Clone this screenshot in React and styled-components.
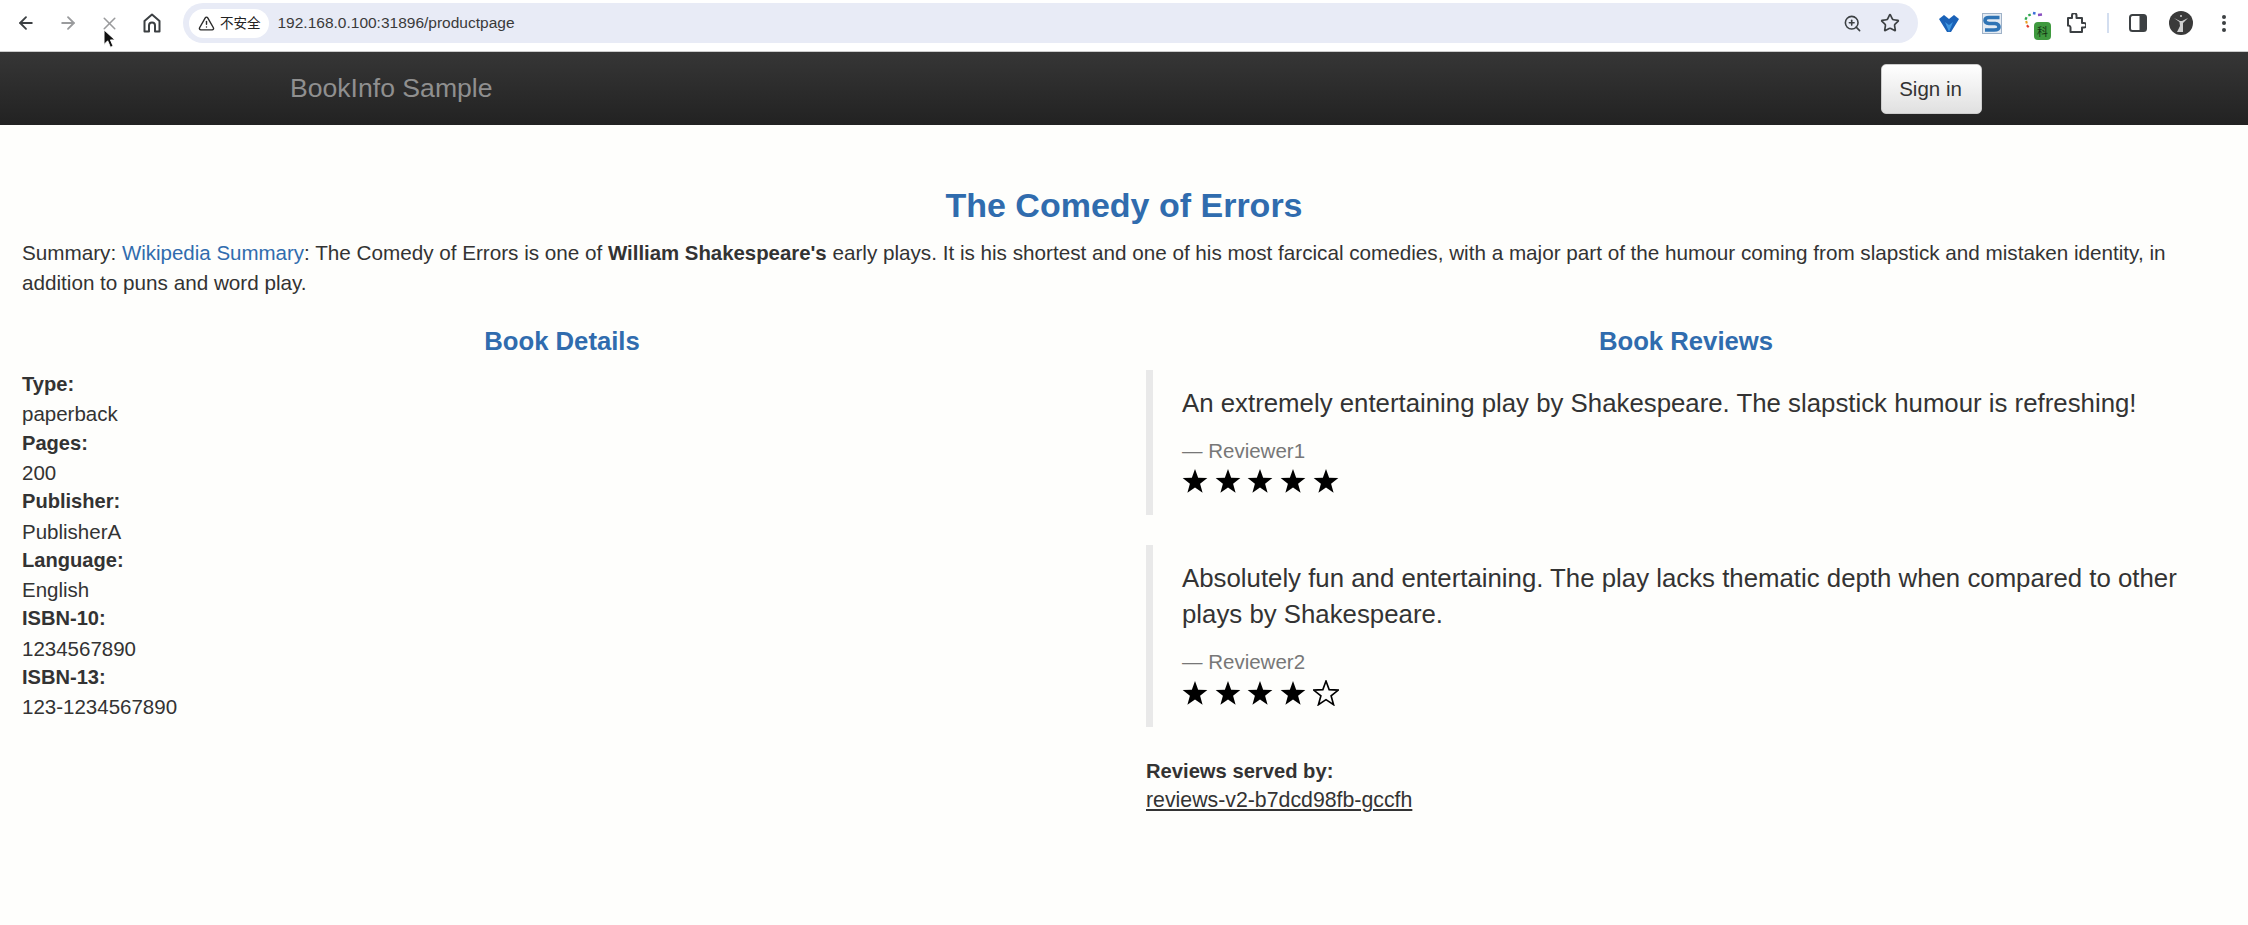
import styled, { createGlobalStyle } from 'styled-components';
import { ArrowLeft, ArrowRight, X, TriangleAlert, ZoomIn, Star as StarIcon } from 'lucide-react';

const details = [
  ['Type:', 'paperback'],
  ['Pages:', '200'],
  ['Publisher:', 'PublisherA'],
  ['Language:', 'English'],
  ['ISBN-10:', '1234567890'],
  ['ISBN-13:', '123-1234567890'],
];

const reviews = [
  {
    text: 'An extremely entertaining play by Shakespeare. The slapstick humour is refreshing!',
    name: 'Reviewer1',
    stars: 5,
  },
  {
    text: 'Absolutely fun and entertaining. The play lacks thematic depth when compared to other plays by Shakespeare.',
    name: 'Reviewer2',
    stars: 4,
  },
];

const STAR_POINTS = '12,1 14.9,8.9 23.4,9.3 16.7,14.6 19,22.8 12,18.1 5,22.8 7.3,14.6 0.6,9.3 9.1,8.9';

const RatingStar = ({ filled }) => (
  <StarSvg viewBox="0 0 24 24">
    <polygon
      points={STAR_POINTS}
      fill={filled ? '#000' : 'none'}
      stroke="#000"
      strokeWidth={filled ? 0 : 1.5}
    />
  </StarSvg>
);

export default function App() {
  return (
    <>
      <GlobalStyle />
      <Toolbar>
        <NavButtons>
          <IconSlot><ArrowLeft size={20} color="#3c4043" strokeWidth={2.2} /></IconSlot>
          <IconSlot><ArrowRight size={20} color="#9a9b9d" strokeWidth={2.2} /></IconSlot>
          <IconSlot><X size={21} color="#9a9b9d" strokeWidth={1.8} /></IconSlot>
          <IconSlot>
            <svg width="18" height="20" viewBox="0 0 18 20" fill="none" stroke="#3c4043" strokeWidth="2" strokeLinejoin="round">
              <path d="M1.5 18.5V8L9 1.5 16.5 8v10.5h-4.5v-6a3 3 0 0 0-6 0v6z" />
            </svg>
          </IconSlot>
          <Cursor viewBox="0 0 14 22">
            <path d="M1 1v16l4-4 3 7 3-1-3-7h5z" fill="#111" stroke="#fff" strokeWidth="1" />
          </Cursor>
        </NavButtons>
        <AddressBar>
          <SecurityChip>
            <TriangleAlert size={17} color="#2b2b2b" strokeWidth={2} />
            <span>不安全</span>
          </SecurityChip>
          <UrlText>192.168.0.100:31896/productpage</UrlText>
          <AddressIcons>
            <ZoomIn size={19} color="#3c4043" strokeWidth={2} />
            <StarIcon size={20} color="#3c4043" strokeWidth={2} />
          </AddressIcons>
        </AddressBar>
        <Extensions>
          <ExtSlot $w={42}>
            <svg width="22" height="19" viewBox="0 0 22 19">
              <path d="M1 5 L6 1 L11 5 L16 1 L21 5 L13 18 H9 Z" fill="#1a62b8" />
              <path d="M7 8 L11 11 L15 8 L11 18 Z" fill="#3f97e0" />
            </svg>
          </ExtSlot>
          <ExtSlot $w={44}>
            <svg width="20" height="21" viewBox="0 0 20 21">
              <rect x="0.5" y="0.5" width="19" height="20" fill="#e3eaf2" stroke="#9fb2c8" />
              <path d="M17.5 4.5 H7 Q3 4.5 3 7.5 Q3 10 7 10.5 H13 Q17 11 17 14 Q17 17 12 17 H3" fill="none" stroke="#2f74b5" strokeWidth="3.6" />
            </svg>
          </ExtSlot>
          <ExtSlot $w={44}>
            <BadgeIcon>
              <svg width="24" height="22" viewBox="0 0 24 22">
                <path d="M3 8 L1 7" stroke="#2fa84f" strokeWidth="2.6" />
                <path d="M3.5 11 L1.5 11.5" stroke="#e8a020" strokeWidth="2.6" />
                <path d="M4.5 14.5 L3 16" stroke="#e23c2c" strokeWidth="2.6" />
                <path d="M6 5 L5 3" stroke="#2fa84f" strokeWidth="2.6" />
                <path d="M10 3.5 L10.5 1" stroke="#3a6fd8" strokeWidth="2.6" />
                <path d="M14 4 L18 3.5" stroke="#8a4fc0" strokeWidth="2.4" />
              </svg>
              <Badge>科</Badge>
            </BadgeIcon>
          </ExtSlot>
          <ExtSlot $w={36}>
            <svg width="20" height="21" viewBox="0 0 20 21" fill="none" stroke="#3c4043" strokeWidth="2" strokeLinejoin="round">
              <path d="M2 5h4V2.5a2 2 0 0 1 4.5 0V5H16v5h2a2 2 0 0 1 0 4.5h-2V19H4.5v-4.5a2.2 2.2 0 0 0 -2.5 -2z" />
            </svg>
          </ExtSlot>
          <ExtSlot $w={28}><Divider /></ExtSlot>
          <ExtSlot $w={32}>
            <svg width="18" height="18" viewBox="0 0 18 18">
              <rect x="1" y="1" width="16" height="16" rx="2.5" fill="#fff" stroke="#3c4043" strokeWidth="2" />
              <rect x="10.5" y="1" width="6.5" height="16" fill="#3c4043" />
            </svg>
          </ExtSlot>
          <ExtSlot $w={54}>
            <svg width="24" height="24" viewBox="0 0 24 24">
              <circle cx="12" cy="12" r="12" fill="#3a3a3a" />
              <path d="M5 7 L10.5 11 L11 15 L8 21 H14 L14 12 L19 7 L13 10 H11 Z" fill="#d0d0d0" />
              <circle cx="12" cy="5" r="1" fill="#d0d0d0" />
            </svg>
          </ExtSlot>
          <ExtSlot $w={32}>
            <MenuDots>
              <i /><i /><i />
            </MenuDots>
          </ExtSlot>
        </Extensions>
      </Toolbar>

      <Navbar>
        <Brand>BookInfo Sample</Brand>
        <SignIn>Sign in</SignIn>
      </Navbar>

      <Main>
        <Title>The Comedy of Errors</Title>
        <Summary>
          Summary: <SummaryLink>Wikipedia Summary</SummaryLink>: The Comedy of Errors is one of <b>William Shakespeare's</b> early plays. It is his shortest and one of his most farcical comedies, with a major part of the humour coming from slapstick and mistaken identity, in addition to puns and word play.
        </Summary>
        <Columns>
          <Column>
            <SectionTitle>Book Details</SectionTitle>
            <DetailList>
              {details.map(([label, value]) => (
                <div key={label}>
                  <dt>{label}</dt>
                  <dd>{value}</dd>
                </div>
              ))}
            </DetailList>
          </Column>
          <Column>
            <SectionTitle>Book Reviews</SectionTitle>
            {reviews.map((review) => (
              <Quote key={review.name}>
                <QuoteText>{review.text}</QuoteText>
                <QuoteFooter>— {review.name}</QuoteFooter>
                <Stars>
                  {[1, 2, 3, 4, 5].map((n) => (
                    <RatingStar key={n} filled={n <= review.stars} />
                  ))}
                </Stars>
              </Quote>
            ))}
            <ServedBy>
              <dt>Reviews served by:</dt>
              <dd><u>reviews-v2-b7dcd98fb-gccfh</u></dd>
            </ServedBy>
          </Column>
        </Columns>
      </Main>
    </>
  );
}

const GlobalStyle = createGlobalStyle`
  html, body {
    margin: 0;
    background: #fefefc;
    overflow: hidden;
  }
  body {
    font-family: "Liberation Sans", Arial, sans-serif;
    font-size: 20.5px;
    line-height: 29.3px;
    color: #333;
  }
`;

const Toolbar = styled.div`
  height: 51px;
  background: #fff;
  display: flex;
  align-items: center;
  padding: 0 0 5px 15px;
  box-sizing: border-box;
`;

const NavButtons = styled.div`
  position: relative;
  display: flex;
  gap: 21px;
  width: 168px;
  flex-shrink: 0;
`;

const IconSlot = styled.span`
  width: 21px;
  height: 21px;
  display: flex;
  align-items: center;
  justify-content: center;
`;

const Cursor = styled.svg`
  position: absolute;
  left: 88px;
  top: 16px;
  width: 13px;
  height: 20px;
`;

const AddressBar = styled.div`
  width: 1735px;
  height: 40px;
  border-radius: 20px;
  background: #e8ebf6;
  display: flex;
  align-items: center;
  padding: 0 18px 0 6px;
  box-sizing: border-box;
  flex-shrink: 0;
`;

const SecurityChip = styled.div`
  height: 29px;
  padding: 0 8px 0 9px;
  background: #fff;
  border-radius: 15px;
  display: flex;
  align-items: center;
  gap: 5px;
  font-family: "Noto Sans CJK SC", sans-serif;
  font-size: 13.5px;
  color: #222;
`;

const UrlText = styled.span`
  margin-left: 9px;
  font-size: 15.5px;
  color: #3a3a3a;
  flex: 1;
`;

const AddressIcons = styled.div`
  display: flex;
  align-items: center;
  gap: 18px;
`;

const Extensions = styled.div`
  display: flex;
  align-items: center;
  padding-left: 10px;
`;

const ExtSlot = styled.span`
  width: ${(p) => p.$w}px;
  display: flex;
  align-items: center;
  justify-content: center;
`;

const BadgeIcon = styled.div`
  position: relative;
  width: 24px;
  height: 24px;
`;

const Badge = styled.span`
  position: absolute;
  right: -3px;
  bottom: -5px;
  width: 17px;
  height: 18px;
  border-radius: 4px;
  background: #3f9a3f;
  color: #143214;
  font-family: "Noto Sans CJK SC", sans-serif;
  font-size: 11px;
  line-height: 18px;
  text-align: center;
`;

const Divider = styled.span`
  width: 2px;
  height: 20px;
  background: #d3def0;
`;

const MenuDots = styled.span`
  display: flex;
  flex-direction: column;
  gap: 2.5px;
  i {
    width: 4px;
    height: 4px;
    border-radius: 50%;
    background: #3c4043;
  }
`;

const Navbar = styled.nav`
  height: 74px;
  box-sizing: border-box;
  background: linear-gradient(to bottom, #363636, #222);
  border-top: 1px solid #ccc;
  display: flex;
  align-items: center;
  justify-content: space-between;
  padding: 0 266px 0 290px;
`;

const Brand = styled.a`
  font-size: 26.6px;
  color: #8f8f8f;
`;

const SignIn = styled.button`
  width: 101px;
  height: 50px;
  border: 1px solid #ccc;
  border-radius: 5px;
  background: linear-gradient(to bottom, #fff, #e0e0e0);
  font-family: inherit;
  font-size: 20.5px;
  color: #333;
  padding: 0 2px 0 0;
`;

const Main = styled.main`
  padding: 0 22px;
`;

const Title = styled.h3`
  margin: 0;
  padding-top: 58px;
  font-size: 34px;
  line-height: 44px;
  font-weight: 700;
  color: #306cae;
  text-align: center;
`;

const Summary = styled.p`
  margin: 11px 0 0;
  font-size: 20.7px;
  letter-spacing: -0.01px;
  b {
    font-size: 20.4px;
  }
`;

const SummaryLink = styled.a`
  color: #306cae;
  font-size: 20.5px;
`;

const Columns = styled.div`
  display: grid;
  grid-template-columns: 1fr 1fr;
  margin: 0 -22px;
`;

const Column = styled.section`
  padding: 0 22px;
`;

const SectionTitle = styled.h4`
  margin: 29px 0 14.5px;
  font-size: 25.7px;
  line-height: 29px;
  font-weight: 700;
  color: #306cae;
  text-align: center;
`;

const DetailList = styled.dl`
  margin: 0;
  dt {
    font-weight: 700;
    font-size: 20.1px;
  }
  dd {
    margin: 0;
  }
`;

const Quote = styled.blockquote`
  margin: 0 0 30px;
  padding: 15px 29px 18px;
  border-left: 7px solid #e9e9e9;
`;

const QuoteText = styled.p`
  margin: 0 0 15px;
  font-size: 25.8px;
  line-height: 36px;
`;

const QuoteFooter = styled.div`
  font-size: 20.5px;
  line-height: 29.3px;
  color: #777;
`;

const Stars = styled.div`
  display: flex;
  gap: 6.7px;
  height: 32px;
  align-items: center;
`;

const StarSvg = styled.svg`
  width: 26px;
  height: 26px;
`;

const ServedBy = styled.dl`
  margin: 0;
  dt {
    font-weight: 700;
    font-size: 20.2px;
  }
  dd {
    margin: 0;
    font-size: 21.3px;
  }
`;
